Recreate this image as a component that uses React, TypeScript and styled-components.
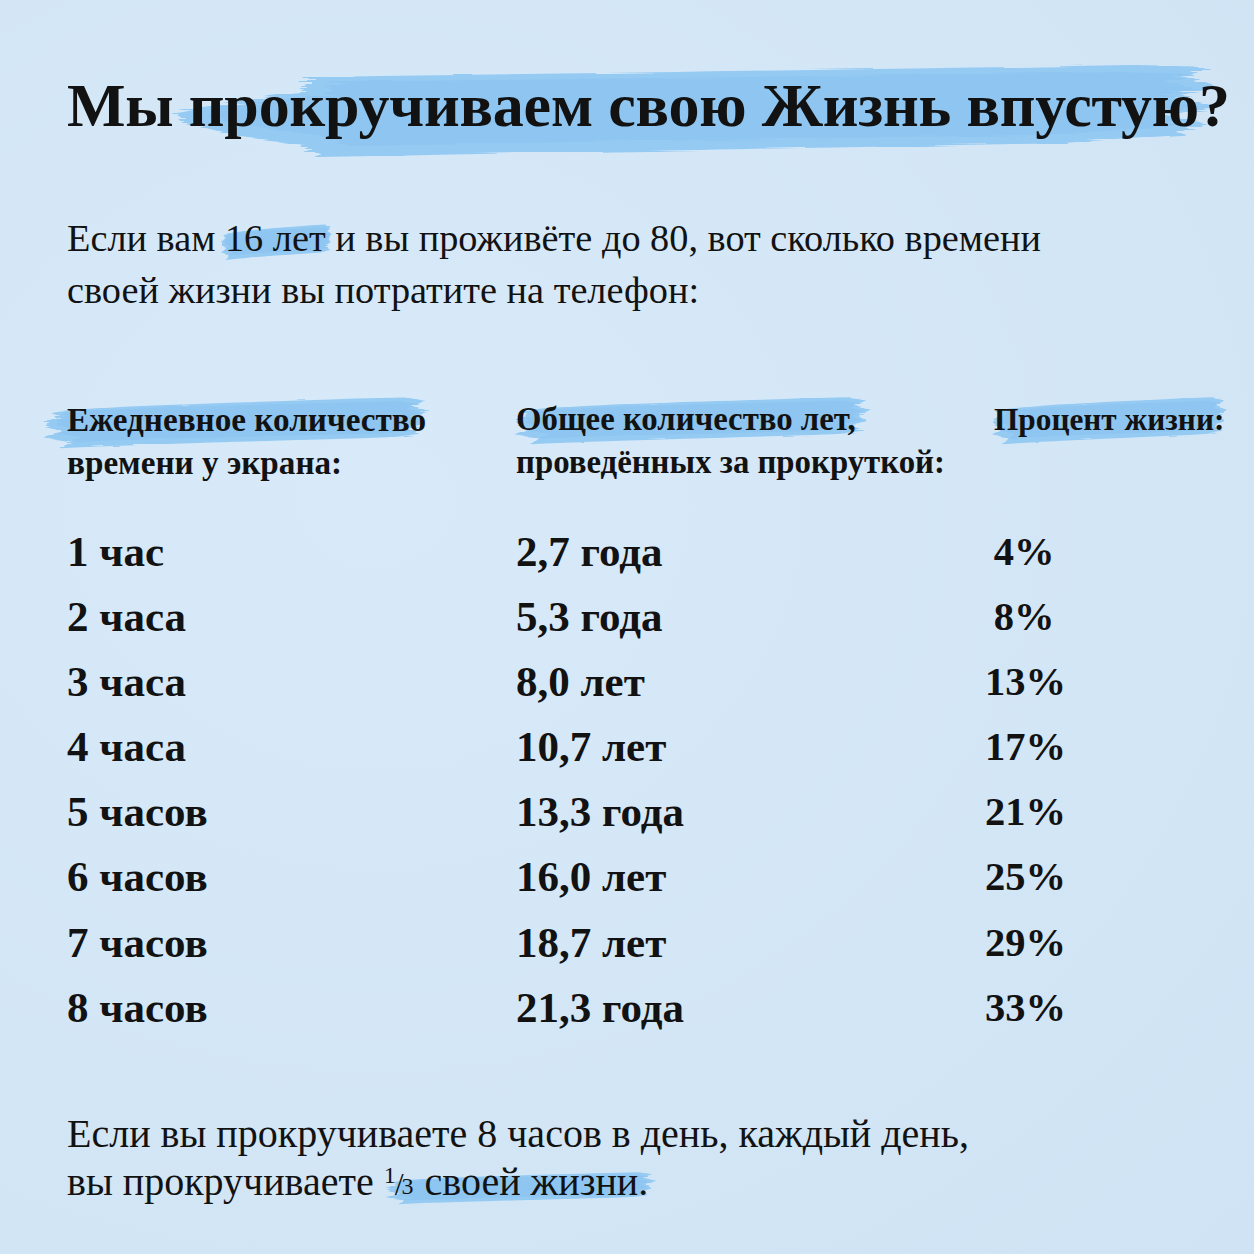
import React from "react";
import styled, { createGlobalStyle } from "styled-components";

const Global = createGlobalStyle`
  html, body { margin: 0; padding: 0; background: #d4e7f7; }
  #root { width: 1254px; height: 1254px; overflow: hidden; }
`;

const Page = styled.div`
  box-sizing: border-box;
  width: 1254px;
  height: 1254px;
  padding: 67px 0 0 67px;
  background: radial-gradient(ellipse at 30% 40%, #d8eaf9 0%, #d3e6f6 60%, #cfe3f4 100%);
  font-family: "Liberation Serif", "Times New Roman", serif;
  color: #121212;
  display: flex;
  flex-direction: column;
`;

const Title = styled.h1`
  margin: 0;
  font-size: 62px;
  line-height: 76px;
  font-weight: 700;
  white-space: nowrap;
  letter-spacing: -0.2px;
`;

const Intro = styled.p`
  margin: 69px 0 0 0;
  font-size: 38.3px;
  line-height: 52px;
  font-weight: 400;
  white-space: nowrap;
`;

const Table = styled.div`
  margin-top: 82px;
  display: grid;
  grid-template-columns: 449px 469px auto;
`;

const HeadCell = styled.div<{ $shift?: number; $size?: number }>`
  font-size: ${(p) => p.$size || 32.8}px;
  line-height: 43px;
  font-weight: 700;
  white-space: nowrap;
  margin-left: ${(p) => p.$shift || 0}px;
  margin-bottom: 35px;
`;

const Cell = styled.div`
  font-size: 43px;
  line-height: 65.1px;
  font-weight: 700;
`;

const PercentCell = styled(Cell)`
  font-size: 40.5px;
  width: 78px;
  text-align: center;
  white-space: nowrap;
`;

const Footer = styled.p`
  margin: 70px 0 0 0;
  font-size: 40px;
  line-height: 48px;
  font-weight: 400;
  white-space: nowrap;
`;

const Fraction = styled.span`
  font-size: 24px;
  line-height: 1;
  margin-right: 1px;
`;

const FracNum = styled.span`
  vertical-align: 12px;
`;

const FracSlash = styled.span`
  font-size: 32px;
  margin: 0 -2px 0 -1px;
`;

const FracDen = styled.span`
  vertical-align: 1px;
`;

const Mark = styled.span`
  position: relative;
  z-index: 0;
  display: inline-block;
`;

const Stroke = styled.svg<{ $l: number; $r: number; $t: number; $b: number }>`
  position: absolute;
  z-index: -1;
  left: ${(p) => p.$l}px;
  top: ${(p) => p.$t}px;
  width: calc(100% - ${(p) => p.$l + p.$r}px);
  height: calc(100% - ${(p) => p.$t + p.$b}px);
  overflow: visible;
  pointer-events: none;
`;

type BrushProps = {
  l: number;
  r: number;
  t: number;
  b: number;
  id: string;
  variant?: number;
};

const paths = [
  // generic brush, rough ends
  "M1,48 L4,40 L2,33 L9,27 C25,20 45,16 65,12 L82,8 L94,6 L99,12 L96,22 L100,30 L97,40 L99,52 L95,60 L98,70 L90,76 C70,80 50,84 30,88 L14,92 L5,95 L7,84 L0,76 L5,66 L1,58 Z",
  // title: thin at left, taller at right
  "M0,52 L3,46 L6,42 L9,36 L12,32 L13,16 C35,13 60,9 80,6 L92,4 L99,6 L97,16 L100,26 L96,36 L100,46 L95,54 L99,62 L96,74 L85,82 C65,86 45,90 14,96 L12,84 L8,78 L4,70 L1,62 Z",
];

const Brush: React.FC<BrushProps> = ({ l, r, t, b, id, variant = 0 }) => (
  <Stroke
    $l={l}
    $r={r}
    $t={t}
    $b={b}
    viewBox="0 0 100 100"
    preserveAspectRatio="none"
    aria-hidden
  >
    <defs>
      <filter id={id} x="-5%" y="-20%" width="110%" height="140%">
        <feTurbulence type="fractalNoise" baseFrequency="0.08 0.6" numOctaves="2" seed="3" result="n" />
        <feDisplacementMap in="SourceGraphic" in2="n" scale="4" />
      </filter>
    </defs>
    <g filter={`url(#${id})`}>
      <path d={paths[variant]} fill="#95caf3" />
      <path d={paths[variant]} fill="#86c0f0" opacity="0.45" transform="translate(3,8) scale(0.95,0.8)" />
    </g>
  </Stroke>
);

const rows: [string, string, string][] = [
  ["1 час", "2,7 года", "4%"],
  ["2 часа", "5,3 года", "8%"],
  ["3 часа", "8,0 лет", "13%"],
  ["4 часа", "10,7 лет", "17%"],
  ["5 часов", "13,3 года", "21%"],
  ["6 часов", "16,0 лет", "25%"],
  ["7 часов", "18,7 лет", "29%"],
  ["8 часов", "21,3 года", "33%"],
];

export default function App() {
  return (
    <Page>
      <Global />
      <Title>
        Мы{" "}
        <Mark>
          <Brush id="b0" variant={1} l={-14} r={12} t={-6} b={-18} />
          прокручиваем свою Жизнь впустую?
        </Mark>
      </Title>
      <Intro>
        Если вам{" "}
        <Mark>
          <Brush id="b1" l={-4} r={-6} t={10} b={2} />
          16 лет
        </Mark>{" "}
        и вы проживёте до 80, вот сколько времени
        <br />
        своей жизни вы потратите на телефон:
      </Intro>
      <Table>
        <HeadCell $size={33.2}>
          <Mark>
            <Brush id="b2" l={-24} r={-2} t={-4} b={-10} />
            Ежедневное количество
          </Mark>
          <br />
          времени у экрана:
        </HeadCell>
        <HeadCell>
          <Mark>
            <Brush id="b3" l={-2} r={-14} t={-4} b={-6} />
            Общее количество лет,
          </Mark>
          <br />
          проведённых за прокруткой:
        </HeadCell>
        <HeadCell $shift={9} $size={31.3}>
          <Mark>
            <Brush id="b4" l={-2} r={-2} t={-4} b={-6} />
            Процент жизни:
          </Mark>
        </HeadCell>
        {rows.map(([a, b, c]) => (
          <React.Fragment key={a}>
            <Cell>{a}</Cell>
            <Cell>{b}</Cell>
            <PercentCell>{c}</PercentCell>
          </React.Fragment>
        ))}
      </Table>
      <Footer>
        Если вы прокручиваете 8 часов в день, каждый день,
        <br />
        вы прокручиваете{" "}
        <Mark>
          <Brush id="b5" l={2} r={-6} t={12} b={0} />
          <Fraction aria-label="⅓">
            <FracNum>1</FracNum>
            <FracSlash>/</FracSlash>
            <FracDen>3</FracDen>
          </Fraction>{" "}
          своей жизни.
        </Mark>
      </Footer>
    </Page>
  );
}
